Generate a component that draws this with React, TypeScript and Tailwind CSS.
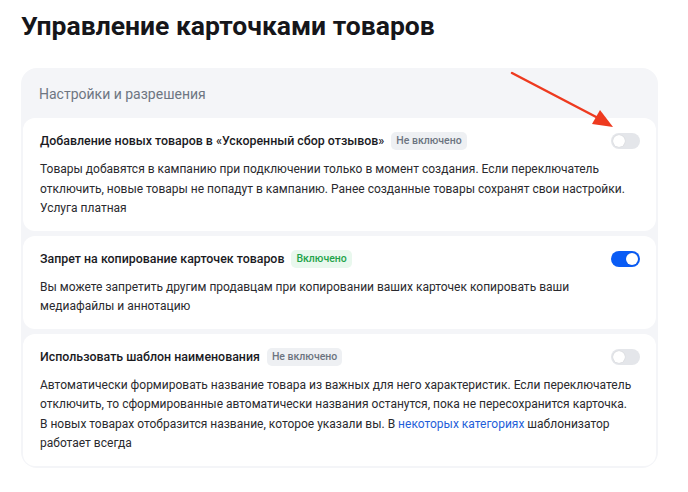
import { ReactNode } from 'react';

const font = { fontFamily: 'Roboto, "Noto Sans", sans-serif' };

function Badge({ on }: { on: boolean }) {
  return on ? (
    <span className="rounded-[5px] bg-[#e9f8ee] px-[5px] py-[2px] text-[10.5px] leading-[14px] font-medium text-[#1fa34a]">
      Включено
    </span>
  ) : (
    <span className="rounded-[5px] bg-[#eef0f3] px-[5px] py-[2px] text-[10.5px] leading-[14px] font-medium text-[#6c7480]">
      Не включено
    </span>
  );
}

function Toggle({ on }: { on: boolean }) {
  return (
    <div
      className={`mr-[2px] flex h-[16px] w-[29px] shrink-0 items-center rounded-full p-[2px] ${
        on ? 'justify-end bg-[#0a5cf5]' : 'justify-start bg-[#e4e6ea]'
      }`}
    >
      <div className="h-[12px] w-[12px] rounded-full bg-white shadow-[0_0_1px_rgba(0,0,0,0.2)]" />
    </div>
  );
}

function SettingCard({
  title,
  on,
  children,
}: {
  title: string;
  on: boolean;
  children: ReactNode;
}) {
  return (
    <div className="rounded-[12px] bg-white pl-[17px] pr-[14px] pt-[13px] pb-[12px]">
      <div className="flex items-center justify-between">
        <div className="flex items-center gap-[7px]">
          <span className="text-[12.4px] leading-[20px] font-medium text-[#1b1b1f]">{title}</span>
          <Badge on={on} />
        </div>
        <Toggle on={on} />
      </div>
      <p className="mt-[9px] text-[12px] leading-[19.5px] text-[#2a2a2e]">{children}</p>
    </div>
  );
}

export default function App() {
  return (
    <div style={font} className="relative min-h-[492px] w-[688px] bg-white px-[21px] pt-[10px]">
      <h1 className="text-[26.5px] leading-[32px] font-bold text-[#16161a]">
        Управление карточками товаров
      </h1>

      <div className="mt-[26px] w-[637px] rounded-[16px] bg-[#f4f5f8] px-[2px] pb-[2px]">
        <div className="px-[16px] pt-[16px] pb-[14px] text-[14px] leading-[20px] text-[#6e7682]">
          Настройки и разрешения
        </div>
        <div className="flex flex-col gap-[5px]">
          <SettingCard title="Добавление новых товаров в «Ускоренный сбор отзывов»" on={false}>
            Товары добавятся в кампанию при подключении только в момент создания. Если переключатель
            отключить, новые товары не попадут в кампанию. Ранее созданные товары сохранят свои настройки.
            Услуга платная
          </SettingCard>
          <SettingCard title="Запрет на копирование карточек товаров" on>
            Вы можете запретить другим продавцам при копировании ваших карточек копировать ваши
            медиафайлы и аннотацию
          </SettingCard>
          <SettingCard title="Использовать шаблон наименования" on={false}>
            Автоматически формировать название товара из важных для него характеристик. Если переключатель
            отключить, то сформированные автоматически названия останутся, пока не пересохранится карточка.
            <br />
            В новых товарах отобразится название, которое указали вы. В{' '}
            <span className="text-[#1f5fd9]">некоторых категориях</span> шаблонизатор работает всегда
          </SettingCard>
        </div>
      </div>

      {/* red annotation arrow */}
      <svg className="absolute left-0 top-0" width="688" height="492" viewBox="0 0 688 492">
        <line x1="512" y1="73" x2="600" y2="119" stroke="#ee3a1f" strokeWidth="2.5" strokeLinecap="round" />
        <polygon points="613,127 592,124 600,110" fill="#ee3a1f" />
      </svg>
    </div>
  );
}
